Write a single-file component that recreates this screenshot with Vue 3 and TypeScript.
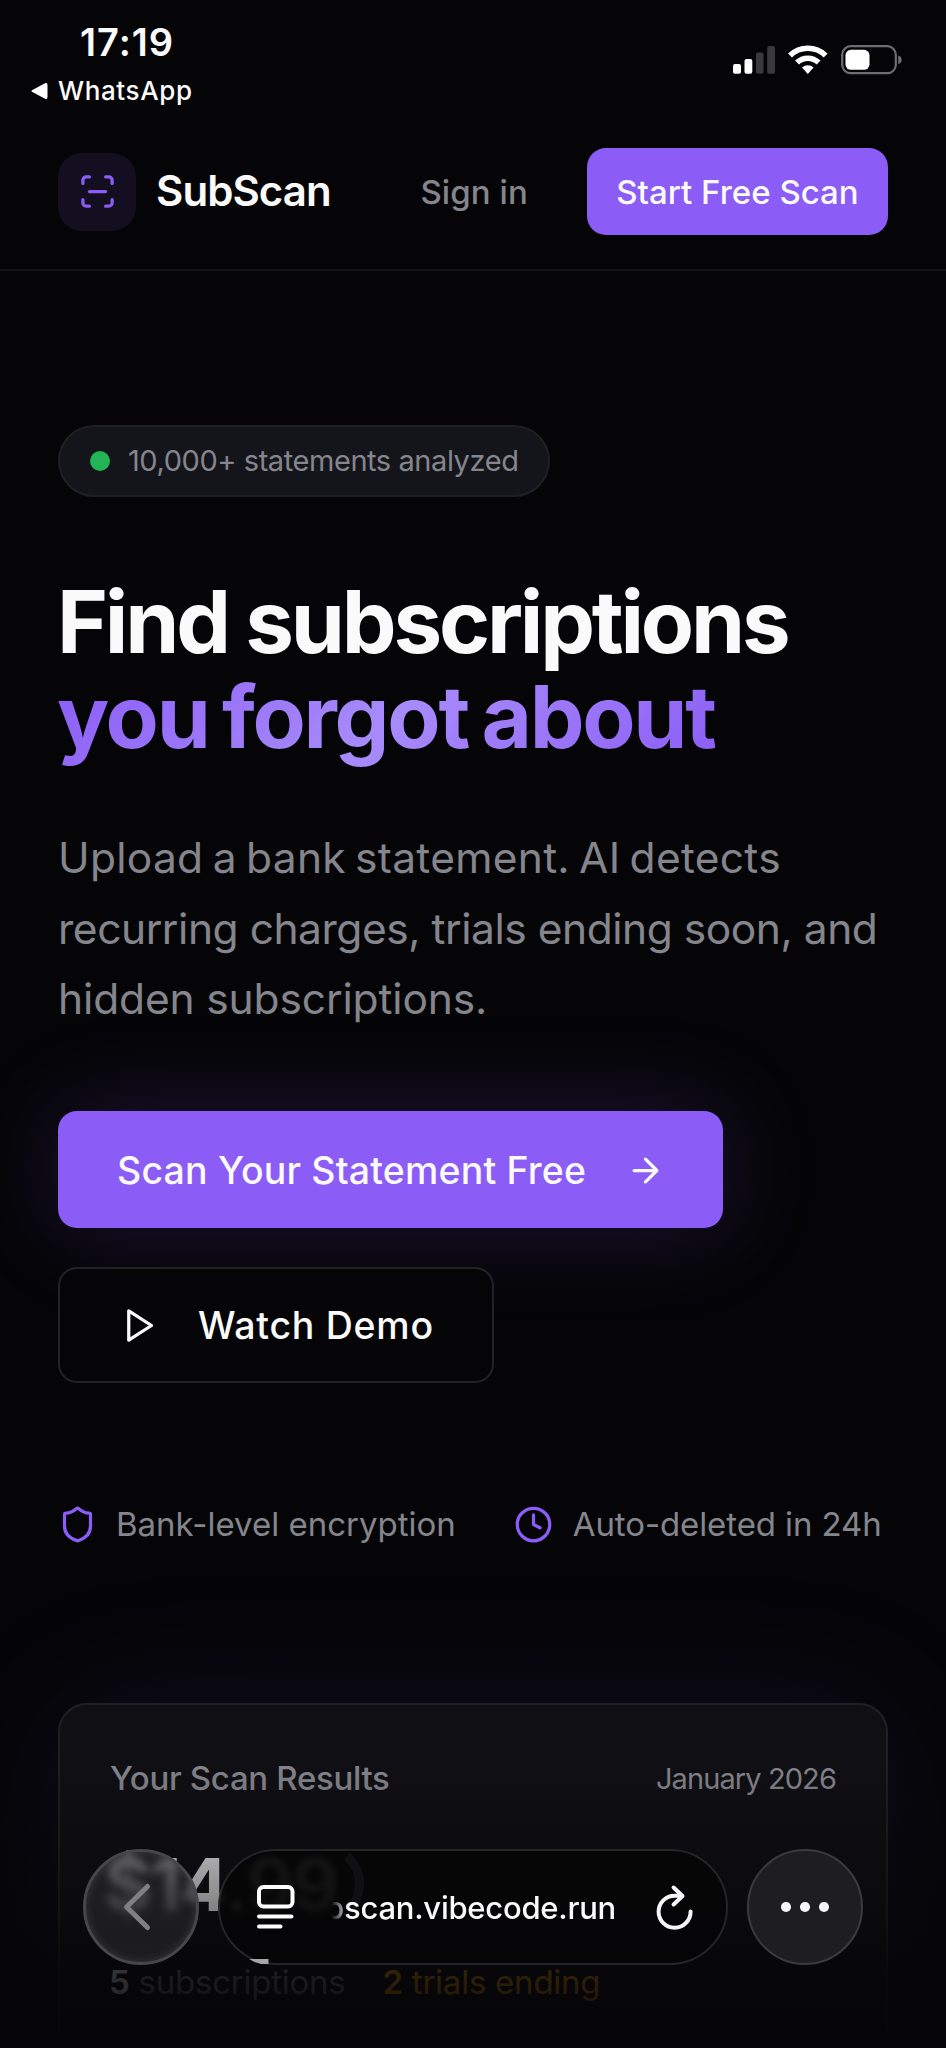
<script setup lang="ts">
interface TrustItem {
  label: string
  kind: 'shield' | 'clock'
}

const trustItems: TrustItem[] = [
  { label: 'Bank-level encryption', kind: 'shield' },
  { label: 'Auto-deleted in 24h', kind: 'clock' },
]
</script>

<template>
  <div class="screen">
    <div class="status">
      <div class="status-left">
        <div class="time">17:19</div>
        <div class="back-app">
          <svg width="18" height="18" viewBox="0 0 18 18"><path d="M2 8.2 15 1.2Q17.500 .2 17.500 3V15Q17.500 17.800 15 16.800L2 9.800Q.6 9 2 8.200Z" fill="#fff" /></svg>
          <span>WhatsApp</span>
        </div>
      </div>
      <svg class="status-icons" width="170" height="32" viewBox="0 0 170 32">
        <rect x="0" y="20" width="8" height="9.700" rx="2" fill="#fff" />
        <rect x="11.500" y="15" width="7.800" height="14.700" rx="2" fill="#fff" />
        <rect x="23" y="8.500" width="7.500" height="21.200" rx="2" fill="#3a3a3c" />
        <rect x="34.200" y="2" width="7.800" height="27.700" rx="2" fill="#3a3a3c" />
        <g fill="none" stroke="#fff" stroke-width="5.600">
          <path d="M57 11.500a25.500 25.500 0 0 1 35.600 0" />
          <path d="M64 18.600a15.600 15.600 0 0 1 21.600 0" />
        </g>
        <path d="M69 23.400a8.800 8.800 0 0 1 11.600 0L74.800 29.900Z" fill="#fff" />
        <rect x="109.200" y="2.200" width="53.600" height="27" rx="8.500" fill="none" stroke="#6e6e70" stroke-width="2.200" />
        <rect x="112.500" y="5.800" width="24" height="20" rx="5.500" fill="#fff" />
        <path d="M165.200 11.500q3.500 1 3.500 4.300t-3.500 4.300Z" fill="#6e6e70" />
      </svg>
    </div>

    <header class="nav">
      <div class="brand">
        <div class="logo">
          <svg class="icon" viewBox="0 0 24 24">
            <path d="M3 7V5a2 2 0 0 1 2-2h2M17 3h2a2 2 0 0 1 2 2v2M21 17v2a2 2 0 0 1-2 2h-2M7 21H5a2 2 0 0 1-2-2v-2M7 12h10" />
          </svg>
        </div>
        <span class="brand-name">SubScan</span>
      </div>
      <div class="nav-actions">
        <a class="signin">Sign in</a>
        <button class="nav-cta">Start Free Scan</button>
      </div>
    </header>

    <main class="main">
      <div class="badge"><i class="dot"></i><span>10,000+ statements analyzed</span></div>

      <h1 class="title">
        <span class="title-line">Find subscriptions</span>
        <span class="title-line accent">you forgot about</span>
      </h1>

      <p class="lead">
        <span class="l1">Upload a bank statement. AI detects</span>
        <span class="l2">recurring charges, trials ending soon, and</span>
        <span class="l3">hidden subscriptions.</span>
      </p>

      <div class="ctas">
        <button class="cta primary">
          <span>Scan Your Statement Free</span>
          <svg class="icon" viewBox="0 0 24 24"><path d="M5 12h14M12 5l7 7-7 7" /></svg>
        </button>
        <button class="cta outline">
          <svg class="icon" viewBox="0 0 24 24"><path d="M6 3l14 9-14 9z" /></svg>
          <span>Watch Demo</span>
        </button>
      </div>

      <div class="trust">
        <div v-for="item in trustItems" :key="item.kind" class="trust-item" :class="item.kind">
          <svg v-if="item.kind === 'shield'" class="icon" viewBox="0 0 24 24">
            <path d="M20 13c0 5-3.500 7.500-7.660 8.950a1 1 0 0 1-.670-.010C7.500 20.500 4 18 4 13V6a1 1 0 0 1 1-1c2 0 4.500-1.200 6.240-2.720a1.170 1.170 0 0 1 1.520 0C14.510 3.810 17 5 19 5a1 1 0 0 1 1 1z" />
          </svg>
          <svg v-else class="icon" viewBox="0 0 24 24"><circle cx="12" cy="12" r="10" /><path d="M12 6v6l4 2" /></svg>
          <span>{{ item.label }}</span>
        </div>
      </div>

      <section class="card">
        <div class="card-head">
          <span class="card-title">Your Scan Results</span>
          <span class="card-date">January 2026</span>
        </div>
        <div class="price">$14.99</div>
        <div class="meta">
          <span><b>5</b> subscriptions</span>
          <span class="trials"><b>2</b> trials ending</span>
        </div>
      </section>
    </main>

    <div class="fade"></div>

    <div class="browser-bar">
      <div class="round back">
        <svg width="116" height="116" viewBox="0 0 116 116"><path d="M64.500 37.500 43.500 58 64.500 78.500" fill="none" stroke="#808083" stroke-width="5" stroke-linecap="round" stroke-linejoin="round" /></svg>
      </div>
      <div class="address">
        <svg class="glint" width="160" height="116" viewBox="0 0 160 116">
          <path d="M31 110H50.500V115H43Q36 113.500 31 110Z" fill="#a5a5a7" />
          <path d="M129 7Q152 29 133 61" fill="none" stroke="#18181a" stroke-width="9" opacity=".6" />
        </svg>
        <svg class="tabs" width="40" height="48" viewBox="0 0 40 48" fill="none" stroke="#fff" stroke-width="4" stroke-linecap="round">
          <rect x="3" y="4" width="33.500" height="19.500" rx="4.500" />
          <path d="M3 33.500H35.500M3 43.500H24.500" />
        </svg>
        <span class="url">bscan.vibecode.run</span>
        <svg class="reload" width="40" height="48" viewBox="0 0 40 48" fill="none" stroke="#f5f5f7" stroke-width="4" stroke-linecap="round" stroke-linejoin="round">
          <path d="M35.600 28.500A16 16 0 1 1 19.600 12.700H27M18.600 4.500 27.500 13 18.600 21.500" />
        </svg>
      </div>
      <div class="round more"><i></i><i></i><i></i></div>
    </div>
  </div>
</template>

<style>
body {
  margin: 0;
  background: #050507;
}
</style>

<style scoped>
.screen {
  position: relative;
  width: 946px;
  height: 2048px;
  overflow: hidden;
  background: #050507;
  color: #fafafa;
  font-family: Inter, "Liberation Sans", sans-serif;
  white-space: nowrap;
}
button {
  font: inherit;
  color: inherit;
  border: 0;
  padding: 0;
}
.icon {
  width: 39px;
  height: 39px;
  flex: none;
  fill: none;
  stroke: currentColor;
  stroke-width: 2;
  stroke-linecap: round;
  stroke-linejoin: round;
}
.status {
  display: flex;
  justify-content: space-between;
  height: 114px;
  padding: 0 43px 0 30px;
  box-sizing: border-box;
}
.time {
  margin: 19px 0 0 50px;
  font-size: 38px;
  font-weight: 600;
  line-height: 46px;
  letter-spacing: 1px;
}
.back-app {
  display: flex;
  align-items: center;
  gap: 10px;
  margin-top: 10px;
  font-size: 26px;
  font-weight: 500;
  line-height: 32px;
  letter-spacing: 0.63px;
}
.status-icons {
  margin-top: 44px;
}
.nav {
  display: flex;
  align-items: center;
  justify-content: space-between;
  height: 155px;
  padding: 0 58px;
  border-bottom: 2px solid #151518;
}
.brand {
  display: flex;
  align-items: center;
  gap: 20px;
}
.logo {
  display: grid;
  place-items: center;
  width: 78px;
  height: 78px;
  border-radius: 24px;
  background: #130e20;
  color: #8b5cf6;
}
.brand-name {
  font-size: 42px;
  font-weight: 600;
  line-height: 50px;
  letter-spacing: -0.93px;
  padding-bottom: 2px;
}
.nav-actions {
  display: flex;
  align-items: center;
  gap: 59px;
  font-size: 33px;
  font-weight: 500;
}
.signin {
  color: #85858d;
  letter-spacing: 0.1px;
}
.nav-cta {
  width: 301px;
  height: 87px;
  border-radius: 19px;
  background: #8b5cf6;
}
.main {
  display: flex;
  flex-direction: column;
  align-items: flex-start;
  padding: 154px 58px 0;
}
.badge {
  display: flex;
  align-items: center;
  gap: 18px;
  width: 492px;
  height: 72px;
  padding-left: 30px;
  padding-bottom: 1px;
  box-sizing: border-box;
  border: 2px solid #202024;
  border-radius: 36px;
  background: #14151a;
  color: #85858d;
  font-size: 29px;
  letter-spacing: -0.43px;
}
.dot {
  width: 20px;
  height: 20px;
  border-radius: 50%;
  background: #22b455;
}
.title {
  margin: 77px 0 0 -1px;
  font-size: 87px;
  font-weight: 700;
  line-height: 95px;
}
.title-line {
  display: block;
  width: max-content;
  letter-spacing: -3.2px;
}
.title-line.accent {
  padding-bottom: 12px;
  margin-bottom: -12px;
  letter-spacing: -2.25px;
  word-spacing: -5px;
  background: linear-gradient(135deg, #8b5cf6 0%, #a78bfa 50%, #8b5cf6 100%);
  background-clip: text;
  -webkit-background-clip: text;
  color: transparent;
}
.lead {
  margin: 59px 0 0;
  color: #85858d;
  font-size: 42.5px;
  line-height: 70.7px;
}
.lead span {
  display: block;
}
.l1 {
  letter-spacing: 0.28px;
  word-spacing: -3px;
}
.l2 {
  letter-spacing: -0.46px;
}
.l3 {
  letter-spacing: -0.14px;
}
.ctas {
  display: flex;
  flex-direction: column;
  align-items: flex-start;
  gap: 39px;
  margin-top: 76px;
  font-size: 37.5px;
  font-weight: 500;
}
.cta {
  display: flex;
  align-items: center;
  box-sizing: border-box;
  border-radius: 19px;
}
.primary {
  justify-content: space-between;
  width: 665px;
  height: 117px;
  padding: 1px 58px 0 59px;
  background: #8b5cf6;
  letter-spacing: 0.17px;
  box-shadow: 0 0 97px rgba(139, 92, 246, 0.2);
}
.outline {
  position: relative;
  width: 436px;
  height: 116px;
  gap: 40px;
  padding-left: 59px;
  border: 2px solid #222226;
  background: #050507;
  letter-spacing: 0.72px;
}
.trust {
  display: flex;
  gap: 58px;
  margin-top: 117px;
  height: 48px;
  color: #85858d;
  font-size: 33px;
}
.trust-item {
  display: flex;
  align-items: center;
  gap: 19px;
}
.trust-item .icon {
  color: #8b5cf6;
}
.trust-item.clock {
  gap: 20px;
  letter-spacing: -0.1px;
}
.card {
  align-self: stretch;
  height: 420px;
  margin-top: 155px;
  padding: 0 50px;
  border: 2px solid #202024;
  border-radius: 29px;
  background: #101014;
  box-shadow: 0 0 145px rgba(139, 92, 246, 0.1);
}
.card-head {
  display: flex;
  align-items: center;
  justify-content: space-between;
  margin-top: 49px;
  height: 48px;
  color: #85858d;
}
.card-title {
  font-size: 33px;
  font-weight: 500;
  letter-spacing: -0.32px;
}
.card-date {
  font-size: 29px;
  letter-spacing: -0.9px;
}
.price {
  margin: 41px 0 0 -6px;
  font-size: 73px;
  font-weight: 700;
  line-height: 84px;
  letter-spacing: -1.8px;
}
.meta {
  display: flex;
  gap: 37px;
  margin: 31px 0 0 -1px;
  color: #85858d;
  font-size: 33px;
  line-height: 48px;
  letter-spacing: -0.24px;
}
.meta b {
  color: #fafafa;
  font-weight: 600;
}
.meta .trials,
.meta .trials b {
  color: #f59e0b;
}
.fade {
  position: absolute;
  inset: 1760px 0 0;
  background: linear-gradient(
    rgba(5, 5, 7, 0) 0,
    rgba(5, 5, 7, 0.3) 90px,
    rgba(5, 5, 7, 0.5) 155px,
    rgba(5, 5, 7, 0.8) 205px,
    rgba(5, 5, 7, 0.88) 240px,
    rgba(5, 5, 7, 0.98) 288px
  );
}
.browser-bar {
  position: absolute;
  left: 83px;
  top: 1849px;
  display: flex;
  gap: 19px;
}
.round {
  width: 116px;
  height: 116px;
  box-sizing: border-box;
  border-radius: 50%;
}
.back {
  border: 3px solid #47474b;
  background: linear-gradient(rgba(48, 48, 51, 0.55), rgba(31, 31, 34, 0.9));
  backdrop-filter: blur(4px);
  box-shadow: inset 0 0 8px rgba(130, 130, 136, 0.3);
}
.back svg {
  margin: -3px;
}
.more {
  display: flex;
  align-items: center;
  justify-content: center;
  gap: 9.4px;
  border: 2px solid #3b3b3f;
  background: #1e1e21;
}
.more i {
  width: 9.6px;
  height: 9.6px;
  border-radius: 50%;
  background: #f5f5f7;
}
.address {
  position: relative;
  display: flex;
  align-items: center;
  width: 510px;
  height: 116px;
  padding: 0 31px 0 36px;
  box-sizing: border-box;
  border: 2px solid #252529;
  border-radius: 58px;
  background: rgba(5, 5, 7, 0.91);
  backdrop-filter: blur(3px);
}
.glint {
  position: absolute;
  left: -2px;
  top: -2px;
}
.tabs {
  position: relative;
}
.url {
  margin-left: auto;
  margin-right: 39px;
  font-size: 31px;
  font-weight: 500;
  letter-spacing: -0.25px;
  mask-image: linear-gradient(90deg, transparent 6px, #000 24px);
}
</style>
